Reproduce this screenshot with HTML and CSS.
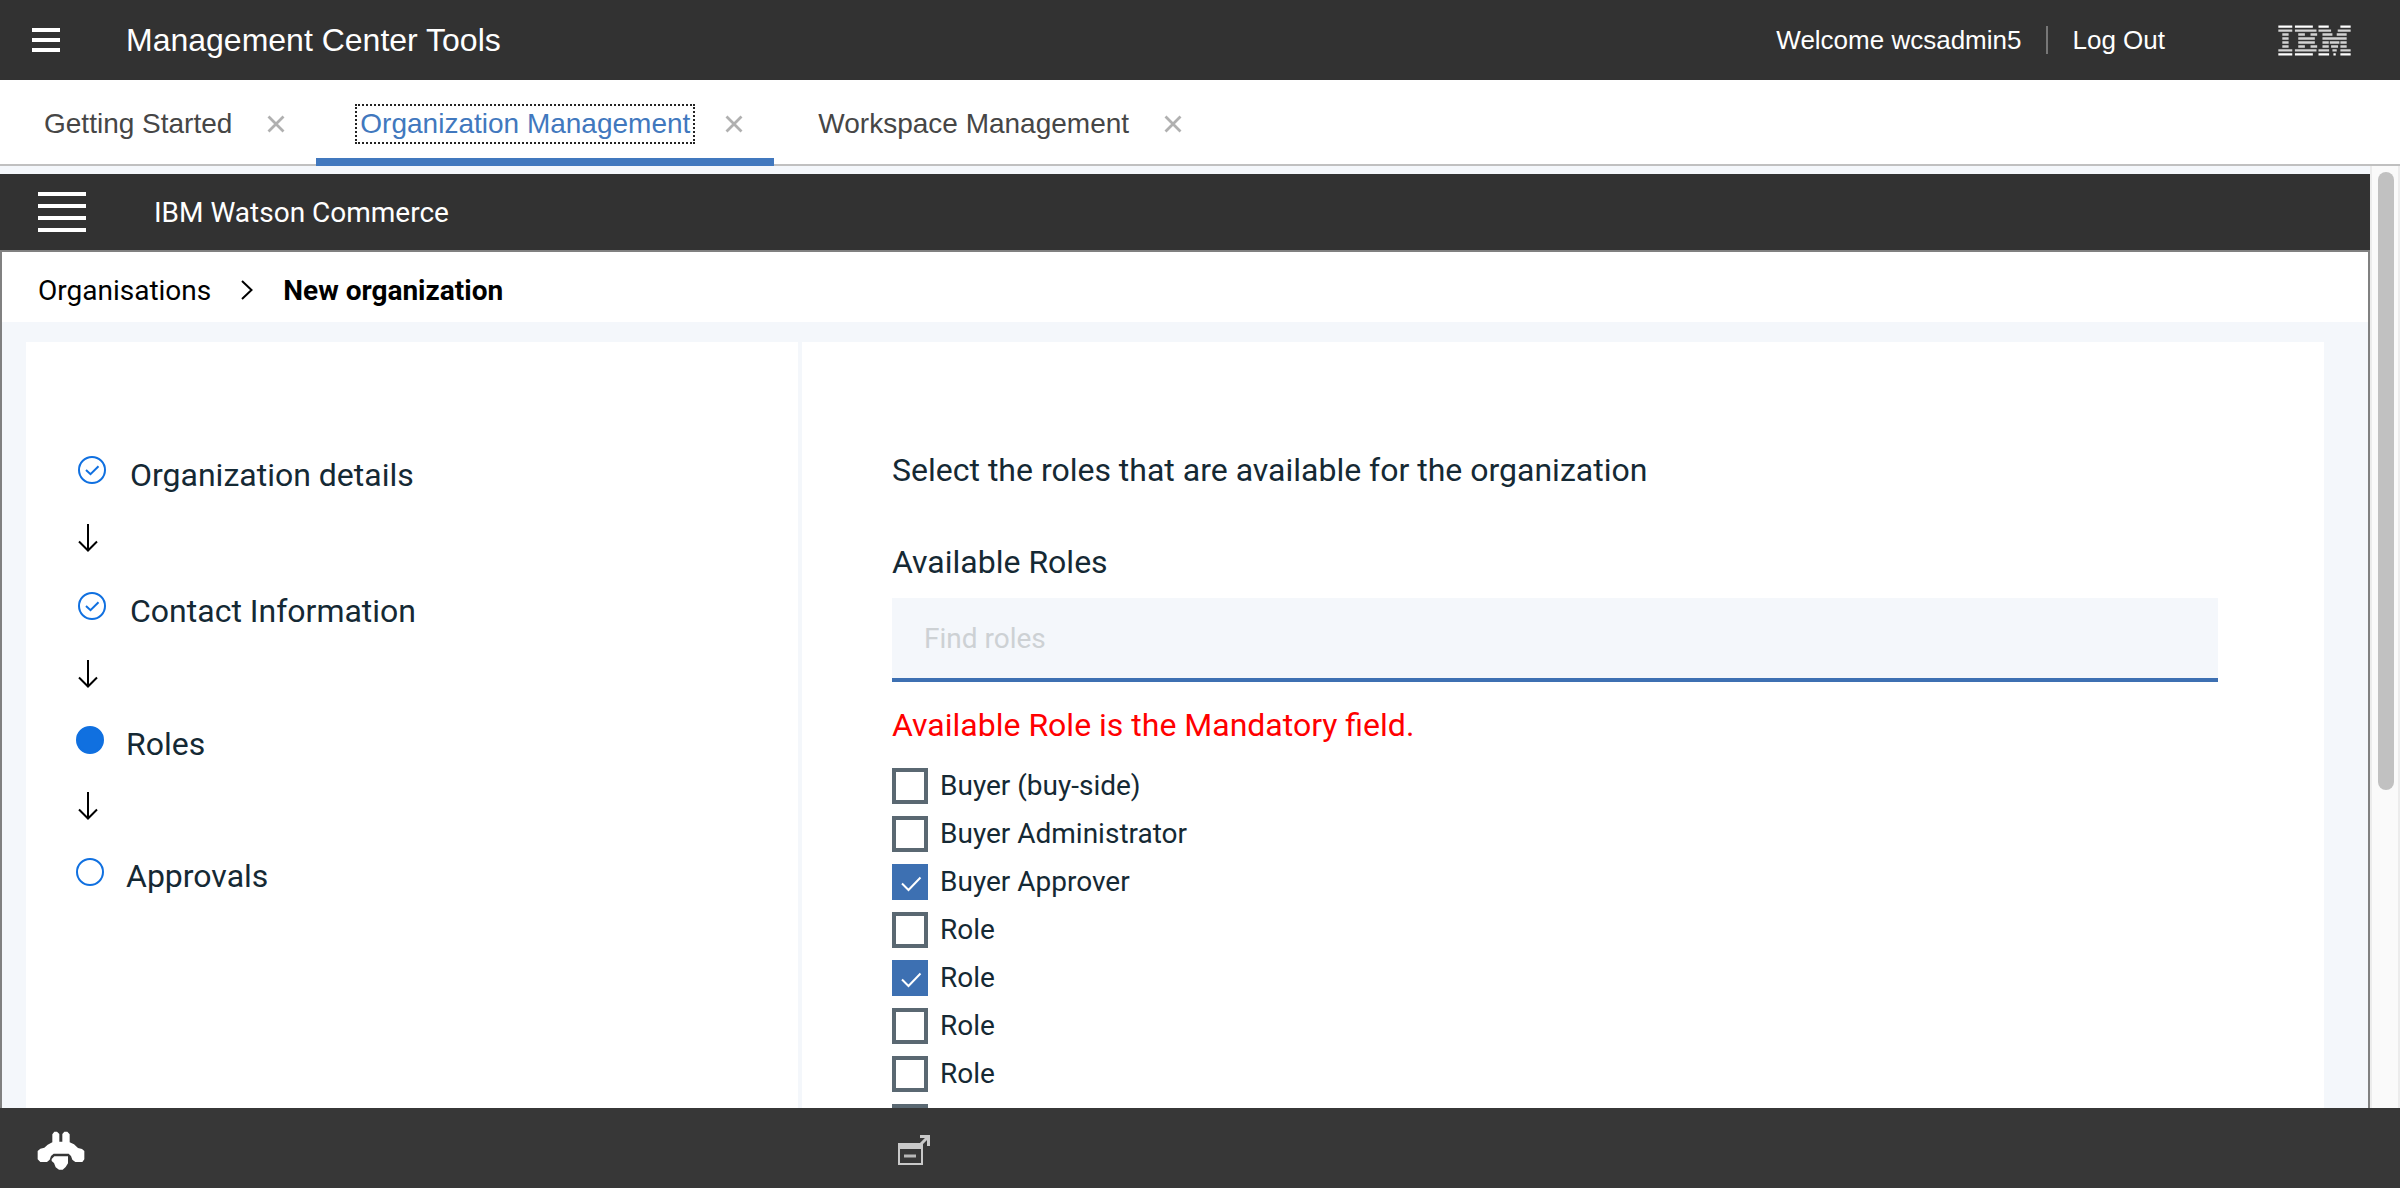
FILE: index.html
```html
<!DOCTYPE html>
<html lang="en">
<head>
<meta charset="utf-8">
<meta name="viewport" content="width=device-width, initial-scale=1">
<title>Management Center Tools</title>
<link rel="stylesheet" href="styles.css">
</head>
<body>
<svg class="defs" aria-hidden="true">
  <symbol id="close" viewBox="0 0 18 18"><path d="M1.500 1.500 16.500 16.500M16.500 1.500 1.500 16.500" fill="none" stroke="#b0b0b0" stroke-width="2.800"/></symbol>
  <symbol id="done" viewBox="0 0 28 28"><circle cx="14" cy="14" r="13" fill="none" stroke="#1070e0" stroke-width="2"/><path d="M8 14 12.500 18.200 20.500 10.200" fill="none" stroke="#1070e0" stroke-width="2"/></symbol>
  <symbol id="arrow" viewBox="0 0 20 28"><path d="M10 0V26M1 17.500 10 26.500 19 17.500" fill="none" stroke="#000" stroke-width="2"/></symbol>
</svg>

<header class="topbar">
  <button class="icon-button" aria-label="Menu">
    <svg width="30" height="26" viewBox="0 0 30 26"><path d="M1 3H29M1 13H29M1 23H29" stroke="#fff" stroke-width="4"/></svg>
  </button>
  <h1 class="topbar-title">Management Center Tools</h1>
  <span class="welcome">Welcome wcsadmin5</span>
  <a class="logout" href="#">Log Out</a>
  <svg class="ibm" width="73" height="31" viewBox="52 46 220 93" role="img" aria-label="IBM">
    <path fill="#fff" d="M53 47h42v7h-42zM103 47h54v7h-54zM174 47h31v7h-31zM240 47h31v7h-31zM53 131h42v7h-42zM103 131h54v7h-54zM174 131h32v7h-32zM219 131h7v7h-7zM240 131h31v7h-31z"/>
    <path fill="#d2d2d2" d="M53 59h42v7h-42zM103 59h65v7h-65zM174 59h38v7h-38zM232 59h39v7h-39zM65 71h19v7h-19zM113 71h20v7h-20zM150 71h20v7h-20zM186 71h30v7h-30zM229 71h30v7h-30zM65 83h19v7h-19zM113 83h50v7h-50zM186 83h73v7h-73zM65 95h19v7h-19zM113 95h50v7h-50zM186 95h19v7h-19zM208 95h29v7h-29zM240 95h19v7h-19zM65 107h19v7h-19zM113 107h20v7h-20zM150 107h20v7h-20zM186 107h19v7h-19zM212 107h21v7h-21zM240 107h19v7h-19zM53 119h42v7h-42zM103 119h65v7h-65zM174 119h32v7h-32zM216 119h13v7h-13zM240 119h31v7h-31z"/>
  </svg>
</header>

<nav class="tabs" aria-label="Open tools">
  <div class="tab">
    <a class="tab-link" href="#">Getting Started</a>
    <button class="tab-close" aria-label="Close Getting Started"><svg><use href="#close"/></svg></button>
  </div>
  <div class="tab tab-active">
    <a class="tab-link" href="#" aria-current="page">Organization Management</a>
    <button class="tab-close" aria-label="Close Organization Management"><svg><use href="#close"/></svg></button>
  </div>
  <div class="tab">
    <a class="tab-link" href="#">Workspace Management</a>
    <button class="tab-close" aria-label="Close Workspace Management"><svg><use href="#close"/></svg></button>
  </div>
</nav>

<div class="viewport">
  <div class="app">
    <header class="appbar">
      <button class="icon-button" aria-label="Commerce menu">
        <svg width="48" height="40" viewBox="0 0 48 40"><path d="M0 2H48M0 14H48M0 26H48M0 38H48" stroke="#fff" stroke-width="4"/></svg>
      </button>
      <span>IBM Watson Commerce</span>
    </header>
    <div class="frame">
      <nav class="breadcrumb" aria-label="Breadcrumb">
        <a href="#">Organisations</a>
        <svg width="12" height="20" viewBox="0 0 12 20"><path d="M1 1 10.500 10 1 19" fill="none" stroke="#000" stroke-width="2"/></svg>
        <strong>New organization</strong>
      </nav>
      <div class="panels">
        <aside class="panel">
          <ol class="steps">
            <li class="step step-done"><svg class="mark"><use href="#done"/></svg>Organization details</li>
            <li class="step-arrow" aria-hidden="true"><svg><use href="#arrow"/></svg></li>
            <li class="step step-done"><svg class="mark"><use href="#done"/></svg>Contact Information</li>
            <li class="step-arrow" aria-hidden="true"><svg><use href="#arrow"/></svg></li>
            <li class="step" aria-current="step"><span class="mark dot dot-current"></span>Roles</li>
            <li class="step-arrow" aria-hidden="true"><svg><use href="#arrow"/></svg></li>
            <li class="step"><span class="mark dot"></span>Approvals</li>
          </ol>
        </aside>
        <main class="panel">
          <form class="form">
            <p class="intro">Select the roles that are available for the organization</p>
            <label class="field-label" for="find">Available Roles</label>
            <input class="field" id="find" type="text" placeholder="Find roles">
            <p class="error">Available Role is the Mandatory field.</p>
            <div class="roles">
              <label class="role"><input type="checkbox">Buyer (buy-side)</label>
              <label class="role"><input type="checkbox">Buyer Administrator</label>
              <label class="role"><input type="checkbox" checked>Buyer Approver</label>
              <label class="role"><input type="checkbox">Role</label>
              <label class="role"><input type="checkbox" checked>Role</label>
              <label class="role"><input type="checkbox">Role</label>
              <label class="role"><input type="checkbox">Role</label>
              <label class="role"><input type="checkbox" aria-label="Role"></label>
            </div>
          </form>
        </main>
      </div>
    </div>
  </div>
  <div class="scrollbar" aria-hidden="true"><div class="thumb"></div></div>
</div>

<footer class="footer">
  <button class="icon-button" aria-label="Assistant">
    <svg width="48" height="40" viewBox="111 150 144 120"><path fill="#fff" d="M157 163 163 155H171L178 162V185H187V162L193 155H202L209 163V187L222 193 234 204 246 207 253 213V238L247 246H226L217 239 213 228 206 221H161L153 228 149 239 141 246H121L113 238V213L121 206 133 203 143 194 157 187Z"/><path fill="#fff" d="M163 229H204V250L197 261 188 269H177L167 262 162 249 155 243V237Z"/></svg>
  </button>
  <button class="icon-button" aria-label="Open in new window">
    <svg width="32" height="30" viewBox="0 0 32 30"><path fill="#c9c9c9" d="M0 8h25v22H0zM2 14v14h21V14z" fill-rule="evenodd"/><path d="M6 21h12" stroke="#b8b8b8" stroke-width="3"/><path d="M22 1.500h8.500V11M30 2 22 10" fill="none" stroke="#c9c9c9" stroke-width="3"/></svg>
  </button>
</footer>
</body>
</html>
```
FILE: styles.css
```css
* { box-sizing: border-box; }

body {
  margin: 0;
  height: 100vh;
  display: flex;
  flex-direction: column;
  overflow: hidden;
  background: #f4f7fb;
  font-family: "Liberation Sans", Arial, sans-serif;
  font-size: 28px;
}

h1, p, ol { margin: 0; padding: 0; font-weight: 400; }
a { color: inherit; text-decoration: none; }
svg { display: block; flex: none; }
.defs { position: absolute; width: 0; height: 0; }

.icon-button, .tab-close {
  padding: 0;
  border: 0;
  background: none;
  cursor: pointer;
}

/* Top bar */
.topbar {
  flex: none;
  height: 80px;
  padding: 0 49px 0 31px;
  display: flex;
  align-items: center;
  background: #323232;
  color: #fff;
  font-size: 26px;
}
.topbar-title { flex: 1; margin-left: 65px; font-size: 32px; line-height: 40px; }
.welcome { padding-right: 25px; }
.logout { padding-left: 24px; border-left: 2px solid #777; line-height: 28px; }
.ibm { margin-left: 113px; }

/* Tool tabs */
.tabs {
  flex: none;
  height: 86px;
  display: flex;
  background: #fff;
  border-bottom: 2px solid #c0c0c0;
  color: #464646;
}
.tab {
  display: flex;
  align-items: center;
  gap: 30px;
  padding: 4px 31px 0 39px;
  margin-bottom: -2px;
  border-bottom: 2px solid #c0c0c0;
}
.tab-link { padding: 0 3px; border: 2px dotted transparent; line-height: 36px; }
.tab-close svg { width: 18px; height: 18px; }
.tab-active { padding-top: 10px; border-bottom: 8px solid #4178be; color: #4178be; }
.tab-active .tab-link { border-color: #222; }

/* Scrolling area */
.viewport { flex: 1; min-height: 0; display: flex; }
.app {
  flex: 1;
  min-width: 0;
  padding-top: 8px;
  display: flex;
  flex-direction: column;
  overflow: hidden;
  font-family: Roboto, "Noto Sans", sans-serif;
}
.scrollbar {
  flex: none;
  width: 30px;
  padding: 6px 4px 0 6px;
  background: #fafafa;
  border: solid #ececec;
  border-width: 0 2px;
}
.thumb { width: 16px; height: 66%; border-radius: 8px; background: #c1c1c1; }

.appbar {
  flex: none;
  height: 76px;
  padding: 0 38px;
  display: flex;
  align-items: center;
  gap: 68px;
  background: #323232;
  color: #fff;
}
.frame {
  flex: 1;
  min-height: 0;
  display: flex;
  flex-direction: column;
  border: 2px solid #808080;
  border-bottom: 0;
}
.breadcrumb {
  flex: none;
  height: 70px;
  padding: 6px 36px 0;
  display: flex;
  align-items: center;
  gap: 30px;
  background: #fff;
  color: #000;
}
.panels {
  flex: 1;
  min-height: 0;
  display: grid;
  grid-template-columns: 772fr 1522fr;
  gap: 4px;
  padding: 20px 44px 0 24px;
}
.panel {
  overflow: hidden;
  background: #fff;
  color: #152934;
  font-size: 32px;
}

/* Progress steps */
.steps { padding: 112px 50px 0; list-style: none; line-height: 36px; }
.step { display: flex; gap: 22px; min-height: 40px; }
.step-done { gap: 24px; min-height: 44px; padding: 2px 0 0 2px; line-height: 38px; }
.mark { flex: none; width: 28px; height: 28px; }
.dot { border: 2px solid #1070e0; border-radius: 50%; }
.dot-current { background: #1070e0; }
.step-arrow { margin: 26px 0 38px 2px; }
.step-arrow svg { width: 20px; height: 28px; }

/* Roles form */
.form { padding: 108px 106px 0 90px; line-height: 40px; }
.intro { margin-bottom: 52px; }
.field-label { display: block; margin-bottom: 16px; }
.field {
  display: block;
  width: 100%;
  height: 84px;
  padding: 0 32px;
  border: 0;
  border-bottom: 4px solid #3d70b2;
  border-radius: 0;
  outline: 0;
  background: #f4f7fb;
  color: #152934;
  font: inherit;
  font-size: 28px;
}
.field::placeholder { color: #cdd1d4; opacity: 1; }
.error { margin: 23px 0; color: #ff0000; }
.roles { display: grid; gap: 12px; }
.role {
  display: flex;
  align-items: center;
  gap: 12px;
  font-size: 28px;
  line-height: 36px;
}
.role input {
  appearance: none;
  flex: none;
  width: 36px;
  height: 36px;
  margin: 0;
  border: 4px solid #5a6872;
  background: #fff;
}
.role input:checked {
  border-color: #3d70b2;
  background: #3d70b2 url("data:image/svg+xml,%3Csvg xmlns='http://www.w3.org/2000/svg' viewBox='0 0 28 28'%3E%3Cpath d='M6 15.500l6.500 6.500L24.500 9.500' fill='none' stroke='%23fff' stroke-width='2'/%3E%3C/svg%3E") center / 28px 28px no-repeat;
}

/* Bottom bar */
.footer {
  flex: none;
  height: 80px;
  padding: 4px 37px 0;
  display: grid;
  grid-template-columns: 861fr 1465fr;
  align-items: center;
  justify-items: start;
  background: #373737;
}
```
